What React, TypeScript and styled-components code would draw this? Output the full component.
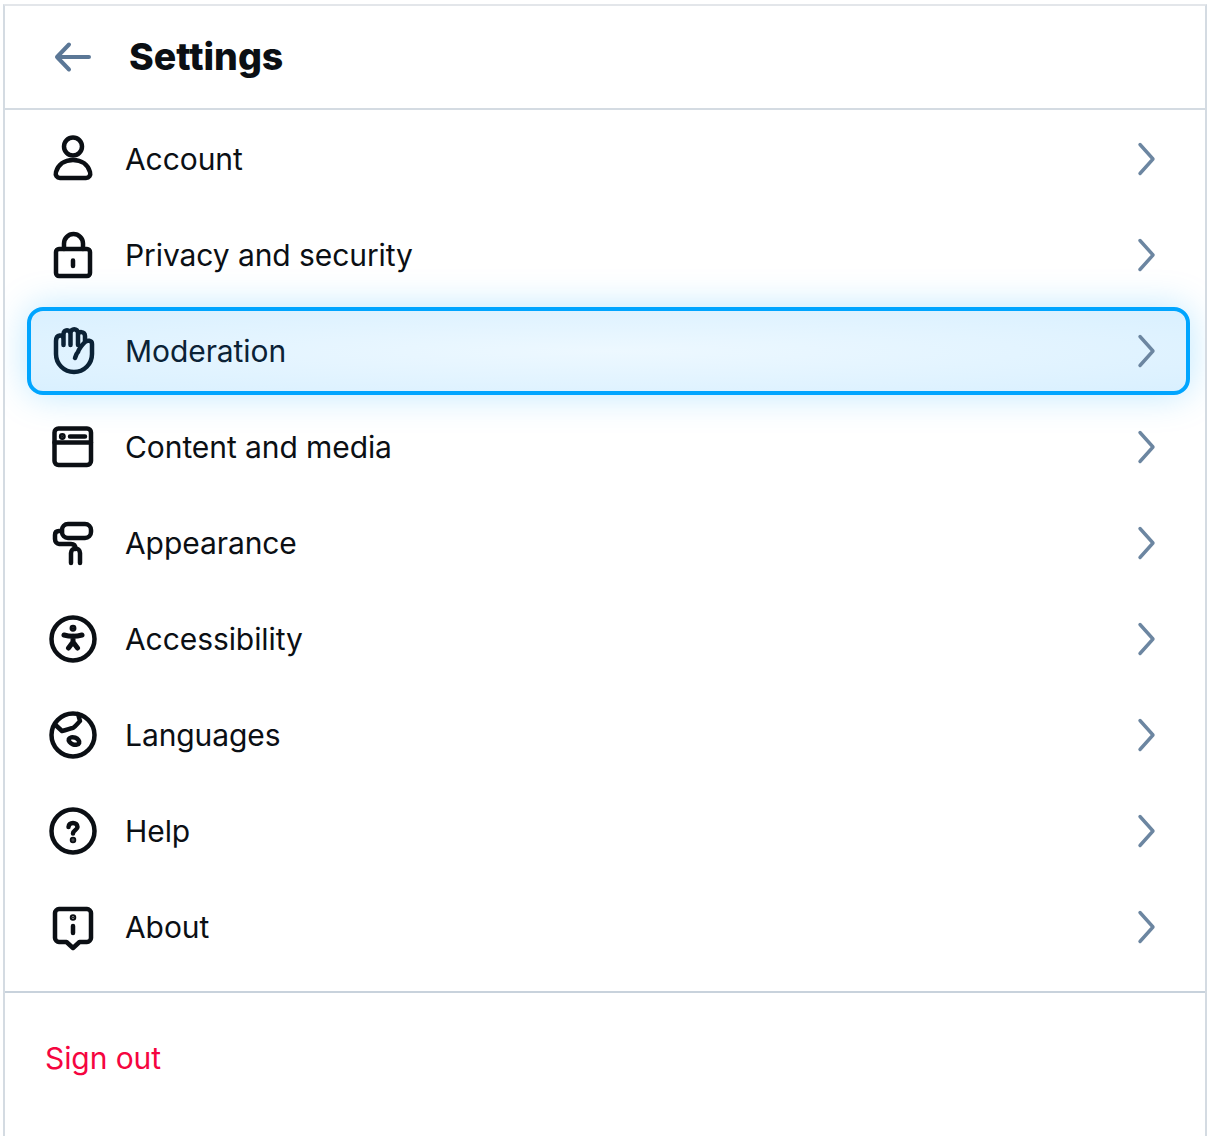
import styled, { createGlobalStyle } from "styled-components";
import type { ReactNode } from "react";

const GlobalStyle = createGlobalStyle`
  html, body {
    margin: 0;
    background: #fff;
    font-family: Inter, "Liberation Sans", sans-serif;
    font-optical-sizing: none;
  }
`;

const Icon = ({ children }: { children: ReactNode }) => (
  <IconSvg viewBox="0 0 48 48" fill="none" stroke="currentColor" strokeWidth="4.5" strokeLinecap="round" strokeLinejoin="round">
    {children}
  </IconSvg>
);

const items: { label: string; active?: boolean; icon: ReactNode }[] = [
  {
    label: "Account",
    icon: (
      <>
        <circle cx="24" cy="11.5" r="9" />
        <path d="M24 25C15 25 9 30 7 37C6 40.5 8 43 11 43H37C40 43 42 40.5 41 37C39 30 33 25 24 25Z" />
      </>
    ),
  },
  {
    label: "Privacy and security",
    icon: (
      <>
        <rect x="7" y="18" width="34" height="27" rx="3" />
        <path d="M15 18V12.5a9.5 9.5 0 0 1 19 0V18M24 29.5V35" />
      </>
    ),
  },
  {
    label: "Moderation",
    active: true,
    icon: (
      <path d="M7 14V27C7 37 15 45 25 45C35 45 43 37 43 27V17C43 13 38 13 36 15C33 18 30 22 29 25C27 27 27 29 26 31M7 14C7 7 14.5 7 14.5 12V18M14.5 12V7C14.5 2 21.5 2 21.5 7V18M21.5 7V6C21.5 1 29 1 29 6V18M29 8C29 4 36 4 36 9V15" />
    ),
  },
  {
    label: "Content and media",
    icon: (
      <>
        <rect x="5.5" y="5.5" width="36.5" height="36.5" rx="4" />
        <path d="M5.5 19.5H42M21 13.5H36" />
        <circle cx="13.3" cy="13.5" r="1.2" fill="currentColor" />
      </>
    ),
  },
  {
    label: "Appearance",
    icon: (
      <>
        <rect x="13" y="5" width="29" height="14" rx="6" />
        <path d="M13 12H10C7.5 12 6 13.5 6 16V20C6 23 8 25 10 25H22C25 25 26.5 27 26.5 30M22 44V34C22 28 31 28 31 34V44" />
      </>
    ),
  },
  {
    label: "Accessibility",
    icon: (
      <>
        <circle cx="24" cy="24" r="21.5" />
        <circle cx="24" cy="13.3" r="1.2" fill="currentColor" />
        <path d="M15 20C20 21.5 28 21.5 33 20M24 21V27M24 27L19.5 33M24 27L28.5 33" strokeWidth="5" />
      </>
    ),
  },
  {
    label: "Languages",
    icon: (
      <>
        <circle cx="24" cy="24" r="21.5" />
        <path d="M6.5 14L13 20C18 19 22 17 24 17C27 15 29 12 31 10L29 3" />
        <ellipse cx="25" cy="30" rx="5.5" ry="3.5" transform="rotate(20 25 30)" />
      </>
    ),
  },
  {
    label: "Help",
    icon: (
      <>
        <circle cx="24" cy="24" r="21.5" />
        <path d="M19.5 20C19.5 17.5 21.5 16 24 16C26.5 16 28.5 17.5 28.5 20C28.5 23 24 23 24 26.5" />
        <circle cx="24" cy="33" r="1" fill="currentColor" />
      </>
    ),
  },
  {
    label: "About",
    icon: (
      <>
        <path d="M10 6H38C40 6 42 8 42 10V35C42 37 40 39 38 39H30.5L24 45L17.5 39H10C8 39 6 37 6 35V10C6 8 8 6 10 6Z" />
        <path d="M24 23V30" />
        <circle cx="24" cy="14.5" r="1" fill="currentColor" />
      </>
    ),
  },
];

const App = () => (
  <Page>
    <GlobalStyle />
    <Header>
      <BackIcon viewBox="0 0 40 40" fill="none" stroke="currentColor" strokeWidth="4" strokeLinecap="round" strokeLinejoin="round">
        <path d="M36 20H4M4 20L16 7.5M4 20L16 32.5" />
      </BackIcon>
      <Title>Settings</Title>
    </Header>
    <List>
      {items.map(item => (
        <Row key={item.label} $active={item.active}>
          <Icon>{item.icon}</Icon>
          <Label>{item.label}</Label>
          <Chevron viewBox="0 0 20 34" fill="none" stroke="currentColor" strokeWidth="3.4" strokeLinecap="round" strokeLinejoin="round">
            <path d="M3 2.5L16 17L3 31.5" />
          </Chevron>
        </Row>
      ))}
    </List>
    <Footer>
      <SignOut>Sign out</SignOut>
    </Footer>
  </Page>
);

export default App;

const Page = styled.div`
  box-sizing: border-box;
  width: 1204px;
  height: 1132px;
  margin: 4px 0 0 3px;
  border: 2px solid #d4dbe2;
  border-top-color: #e3e6ea;
  border-bottom: 0;
  overflow: hidden;
`;

const Header = styled.header`
  box-sizing: border-box;
  display: flex;
  align-items: center;
  gap: 36px;
  height: 104px;
  padding-left: 48px;
  border-bottom: 2px solid #d4dbe2;
`;

const BackIcon = styled.svg`
  width: 40px;
  height: 40px;
  color: #5b7796;
`;

const Title = styled.h1`
  margin: 0;
  font-size: 37.5px;
  font-weight: 800;
  line-height: 44px;
  color: #0b0f14;
`;

const List = styled.div`
  display: flex;
  flex-direction: column;
  padding-top: 1px;
`;

const Row = styled.div<{ $active?: boolean }>`
  box-sizing: border-box;
  display: flex;
  align-items: center;
  gap: 28px;
  height: 88px;
  margin: 4px 15px 4px 22px;
  padding: 0 29px 0 22px;
  border-radius: 16px;
  border: 4px solid ${({ $active }) => ($active ? "#00a5ff" : "transparent")};
  background: ${({ $active }) =>
    $active ? "radial-gradient(ellipse at center, #edf8ff 0%, #d9f0ff 100%)" : "transparent"};
  box-shadow: ${({ $active }) => ($active ? "0 0 36px rgba(0, 165, 255, 0.26)" : "none")};
  color: ${({ $active }) => ($active ? "#0b2236" : "#0b0f14")};
`;

const IconSvg = styled.svg`
  flex: none;
  width: 48px;
  height: 48px;
  margin-left: -4px;
`;

const Label = styled.span`
  flex: 1;
  font-size: 30px;
  line-height: 40px;
  letter-spacing: -0.08px;
`;

const Chevron = styled.svg`
  flex: none;
  width: 20px;
  height: 34px;
  color: #6c86a1;
`;

const Footer = styled.footer`
  box-sizing: border-box;
  height: 160px;
  margin-top: 16px;
  padding: 45px 0 0 40px;
  border-top: 2px solid #c8d2dc;
`;

const SignOut = styled.span`
  font-size: 30px;
  line-height: 40px;
  letter-spacing: -0.08px;
  color: #f5053f;
`;
